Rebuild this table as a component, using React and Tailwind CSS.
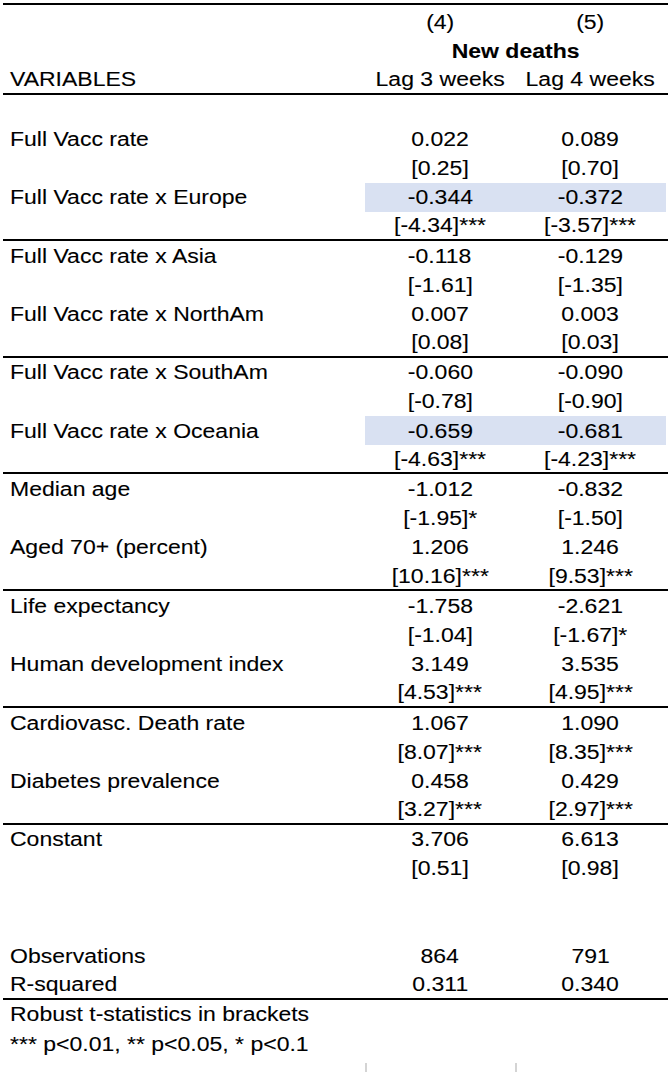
const rows = [
  { label: "Full Vacc rate", a: "0.022", b: "0.089" },
  { label: "", a: "[0.25]", b: "[0.70]" },
  { label: "Full Vacc rate x Europe", a: "-0.344", b: "-0.372", shade: true },
  { label: "", a: "[-4.34]***", b: "[-3.57]***", line: true },
  { label: "Full Vacc rate x Asia", a: "-0.118", b: "-0.129" },
  { label: "", a: "[-1.61]", b: "[-1.35]" },
  { label: "Full Vacc rate x NorthAm", a: "0.007", b: "0.003" },
  { label: "", a: "[0.08]", b: "[0.03]", line: true },
  { label: "Full Vacc rate x SouthAm", a: "-0.060", b: "-0.090" },
  { label: "", a: "[-0.78]", b: "[-0.90]" },
  { label: "Full Vacc rate x Oceania", a: "-0.659", b: "-0.681", shade: true },
  { label: "", a: "[-4.63]***", b: "[-4.23]***", line: true },
  { label: "Median age", a: "-1.012", b: "-0.832" },
  { label: "", a: "[-1.95]*", b: "[-1.50]" },
  { label: "Aged 70+ (percent)", a: "1.206", b: "1.246" },
  { label: "", a: "[10.16]***", b: "[9.53]***", line: true },
  { label: "Life expectancy", a: "-1.758", b: "-2.621" },
  { label: "", a: "[-1.04]", b: "[-1.67]*" },
  { label: "Human development index", a: "3.149", b: "3.535" },
  { label: "", a: "[4.53]***", b: "[4.95]***", line: true },
  { label: "Cardiovasc. Death rate", a: "1.067", b: "1.090" },
  { label: "", a: "[8.07]***", b: "[8.35]***" },
  { label: "Diabetes prevalence", a: "0.458", b: "0.429" },
  { label: "", a: "[3.27]***", b: "[2.97]***", line: true },
  { label: "Constant", a: "3.706", b: "6.613" },
  { label: "", a: "[0.51]", b: "[0.98]" },
  { label: "", a: "", b: "" },
  { label: "", a: "", b: "" },
  { label: "Observations", a: "864", b: "791" },
  { label: "R-squared", a: "0.311", b: "0.340", line: true },
];

// the sheet text is a bit wider than Liberation Sans, so stretch it
function Txt({ left, children }) {
  return (
    <span className={`inline-block whitespace-nowrap scale-x-[1.15] ${left ? "origin-left" : ""}`}>
      {children}
    </span>
  );
}

function Row({ label, a, b, shade, line }) {
  return (
    <div className={`flex h-[29.2px] items-center ${line ? "border-b-2 border-black" : ""}`}>
      <div className="w-[362px] pl-[7px]">
        <Txt left>{label}</Txt>
      </div>
      <div className={`flex h-full w-[150px] items-center justify-center ${shade ? "bg-[#d9e1f2]" : ""}`}>
        <Txt>{a}</Txt>
      </div>
      <div className={`flex h-full w-[151px] items-center justify-center ${shade ? "bg-[#d9e1f2]" : ""}`}>
        <Txt>{b}</Txt>
      </div>
    </div>
  );
}

export default function App() {
  return (
    <div className="h-[1072px] w-[668px] overflow-hidden bg-white pl-[3px] text-[20px] leading-none text-black [-webkit-text-stroke:0.1px_#000] [font-family:'Liberation_Sans',Arial,sans-serif]">
      <div className="h-[3px]" />
      <div className="h-[2px] bg-black" />
      <div className="flex h-[31.6px] items-center pt-[2px]">
        <div className="w-[362px]" />
        <div className="w-[150px] text-center">
          <Txt>(4)</Txt>
        </div>
        <div className="w-[151px] text-center">
          <Txt>(5)</Txt>
        </div>
      </div>
      <div className="flex h-[29.2px] items-center">
        <div className="w-[362px]" />
        <div className="w-[301px] text-center font-bold">
          <Txt>New deaths</Txt>
        </div>
      </div>
      <div className="flex h-[29.2px] items-center border-b-2 border-black">
        <div className="w-[362px] pl-[7px]">
          <Txt left>VARIABLES</Txt>
        </div>
        <div className="w-[150px] text-center">
          <Txt>Lag 3 weeks</Txt>
        </div>
        <div className="w-[151px] text-center">
          <Txt>Lag 4 weeks</Txt>
        </div>
      </div>
      <div className="h-[29.2px]" />
      {rows.map((r, i) => (
        <Row key={i} {...r} />
      ))}
      <div className="flex h-[29.2px] items-center pl-[7px]">
        <Txt left>Robust t-statistics in brackets</Txt>
      </div>
      <div className="flex h-[29.2px] items-center pl-[7px]">
        <Txt left>*** p&lt;0.01, ** p&lt;0.05, * p&lt;0.1</Txt>
      </div>
      <div className="flex h-[29.2px]">
        <div className="w-[362px]" />
        <div className="mt-[5px] w-[150px] border-l-2 border-[#d4d4d4]" />
        <div className="mt-[5px] w-[151px] border-l-2 border-[#d4d4d4]" />
      </div>
    </div>
  );
}
